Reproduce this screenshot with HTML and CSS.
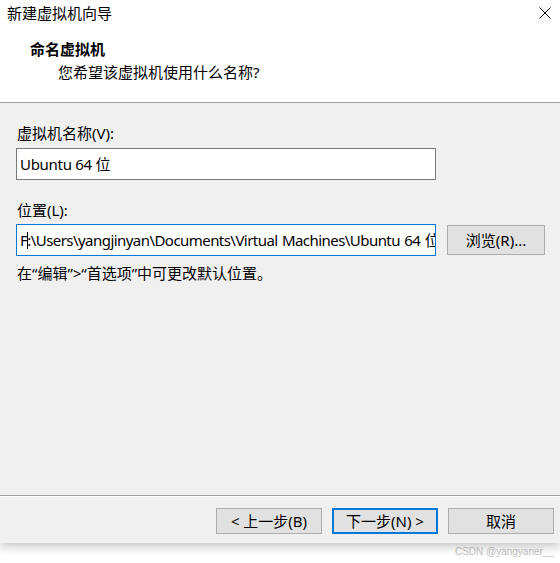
FILE: index.html
```html
<!DOCTYPE html>
<html>
<head>
  <meta charset="utf-8">
  <title>新建虚拟机向导</title>
  <link rel="stylesheet" href="styles.css">
</head>
<body>
  <div class="dialog">
    <div class="header">
      <div class="title-bar">
        <span class="title">新建虚拟机向导</span>
        <svg class="close" width="12" height="12" viewBox="0 0 12 12">
          <path d="M0.5 0.5 L11.5 11.5 M11.5 0.5 L0.5 11.5" stroke="#000" stroke-width="1" fill="none"/>
        </svg>
      </div>
      <div class="heading">命名虚拟机</div>
      <div class="subheading">您希望该虚拟机使用什么名称?</div>
    </div>

    <div class="content">
      <div class="label">虚拟机名称(V):</div>
      <div class="field name-field">Ubuntu 64 位</div>

      <div class="label second">位置(L):</div>
      <div class="path-row">
        <div class="field path-field focused">F<span class="caret"></span>:\Users\yangjinyan\Documents\Virtual Machines\Ubuntu 64 位</div>
        <button class="btn browse-btn">浏览(R)...</button>
      </div>
      <div class="note">在“编辑”&gt;“首选项”中可更改默认位置。</div>
    </div>

    <div class="footer">
      <button class="btn">&lt; 上一步(B)</button>
      <button class="btn default-btn">下一步(N) &gt;</button>
      <button class="btn">取消</button>
    </div>
  </div>
  <div class="watermark">CSDN @yangyaner__</div>
</body>
</html>
```

FILE: styles.css
```css
body {
  margin: 0;
  background-color: white;
  font-family: "Noto Sans", "Noto Sans CJK SC", sans-serif;
  font-size: 15px;
  color: #000;
  overflow: hidden;
}

.dialog {
  width: 560px;
  height: 543px;
  background-color: #f0f0f0;
  display: flex;
  flex-direction: column;
  box-shadow: 0 3px 10px rgba(0,0,0,0.25);
  position: relative;
}

.header {
  background-color: white;
  height: 102px;
  border-bottom: 1px solid #a0a0a0;
}

.title-bar {
  display: flex;
  justify-content: space-between;
  align-items: center;
  height: 26px;
  padding: 0 9px 0 7px;
}

.title {
  line-height: 26px;
}

.close {
  display: block;
}

.heading {
  font-weight: bold;
  margin: 13px 0 0 30px;
  line-height: 20px;
}

.subheading {
  margin: 3px 0 0 58px;
  line-height: 20px;
}

.content {
  flex: 1;
  padding: 20px 0 0 16px;
}

.label {
  line-height: 20px;
  padding-left: 1px;
  margin-bottom: 5px;
}

.label.second {
  margin-top: 20px;
  margin-bottom: 4px;
}

.field {
  box-sizing: border-box;
  width: 420px;
  height: 32px;
  line-height: 30px;
  border: 1px solid #7a7a7a;
  background-color: white;
  padding: 0 3px;
  white-space: nowrap;
  overflow: hidden;
  letter-spacing: -0.3px;
}

.field.focused {
  border-color: #0078d7;
}

.path-field {
  letter-spacing: -0.55px;
  word-spacing: 1px;
}

.caret {
  display: inline-block;
  width: 1px;
  height: 17px;
  background-color: #000;
  vertical-align: middle;
  margin: 0 -1px 0 0;
  position: relative;
  top: -1px;
}

.path-row {
  display: flex;
  align-items: center;
  gap: 11px;
}

.btn {
  box-sizing: border-box;
  font-family: "Noto Sans", "Noto Sans CJK SC", sans-serif;
  font-size: 15px;
  color: #000;
  background-color: #e1e1e1;
  border: 1px solid #adadad;
  padding: 0;
  height: 26px;
  width: 106px;
  line-height: 24px;
}

.browse-btn {
  width: 98px;
  height: 30px;
  line-height: 28px;
}

.default-btn {
  border: 2px solid #0078d7;
  line-height: 22px;
}

.note {
  margin-top: 7px;
  line-height: 20px;
  padding-left: 1px;
}

.footer {
  border-top: 1px solid #a0a0a0;
  box-shadow: inset 0 1px 0 white;
  display: flex;
  justify-content: flex-end;
  gap: 10px;
  padding: 12px 6px 9px 0;
}

.watermark {
  text-align: right;
  padding-right: 6px;
  font-family: "Liberation Sans", sans-serif;
  font-size: 10px;
  line-height: 18px;
  color: #c4c4c4;
}
```
